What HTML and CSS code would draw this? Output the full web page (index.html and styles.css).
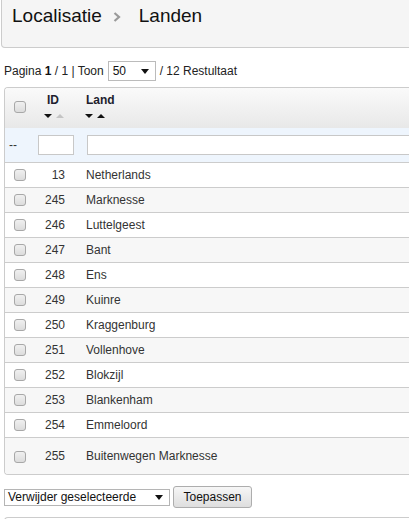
FILE: index.html
```html
<!DOCTYPE html>
<html lang="nl">
<head>
<meta charset="utf-8">
<title>Landen</title>
<link rel="stylesheet" href="styles.css">
</head>
<body>
<div class="page">
  <div class="crumbs">
    <span>Localisatie</span>
    <svg class="sep" width="8" height="10" viewBox="0 0 8 10"><polyline points="1.5,1 6,5 1.5,9" fill="none" stroke="#9a9a9a" stroke-width="2.2"/></svg>
    <span>Landen</span>
  </div>

  <div class="pager">
    <span>Pagina <b>1</b> / 1 | Toon</span>
    <span class="dd dd-small"><span>50</span><svg class="caret" width="8" height="5" viewBox="0 0 8 5"><polygon points="0,0 8,0 4,5" fill="#111"/></svg></span>
    <span>/ 12 Restultaat</span>
  </div>

  <div class="grid-box">
    <table class="grid">
      <colgroup><col class="c-chk"><col class="c-id"><col class="c-land"></colgroup>
      <thead>
        <tr class="head">
          <th class="chk"><span class="cb"></span></th>
          <th class="h-id"><span class="lbl">ID</span><span class="sort"><i class="dn"></i><i class="up off"></i></span></th>
          <th class="h-land"><span class="lbl">Land</span><span class="sort"><i class="dn"></i><i class="up"></i></span></th>
        </tr>
        <tr class="filter">
          <td class="dash">--</td>
          <td class="f-id"><span class="inp inp-id"></span></td>
          <td class="f-land"><span class="inp inp-land"></span></td>
        </tr>
      </thead>
      <tbody>
        <tr><td class="chk"><span class="cb"></span></td><td class="id">13</td><td class="land">Netherlands</td></tr>
        <tr><td class="chk"><span class="cb"></span></td><td class="id">245</td><td class="land">Marknesse</td></tr>
        <tr><td class="chk"><span class="cb"></span></td><td class="id">246</td><td class="land">Luttelgeest</td></tr>
        <tr><td class="chk"><span class="cb"></span></td><td class="id">247</td><td class="land">Bant</td></tr>
        <tr><td class="chk"><span class="cb"></span></td><td class="id">248</td><td class="land">Ens</td></tr>
        <tr><td class="chk"><span class="cb"></span></td><td class="id">249</td><td class="land">Kuinre</td></tr>
        <tr><td class="chk"><span class="cb"></span></td><td class="id">250</td><td class="land">Kraggenburg</td></tr>
        <tr><td class="chk"><span class="cb"></span></td><td class="id">251</td><td class="land">Vollenhove</td></tr>
        <tr><td class="chk"><span class="cb"></span></td><td class="id">252</td><td class="land">Blokzijl</td></tr>
        <tr><td class="chk"><span class="cb"></span></td><td class="id">253</td><td class="land">Blankenham</td></tr>
        <tr><td class="chk"><span class="cb"></span></td><td class="id">254</td><td class="land">Emmeloord</td></tr>
        <tr class="last"><td class="chk"><span class="cb"></span></td><td class="id">255</td><td class="land">Buitenwegen Marknesse</td></tr>
      </tbody>
    </table>
  </div>

  <div class="actions">
    <span class="dd dd-action"><span>Verwijder geselecteerde</span><svg class="caret" width="8" height="5" viewBox="0 0 8 5"><polygon points="0,0 8,0 4,5" fill="#111"/></svg></span>
    <span class="btn">Toepassen</span>
  </div>

  <div class="next-box"></div>
</div>
</body>
</html>
```

FILE: styles.css
```css
html, body {
  margin: 0;
  padding: 0;
  overflow: hidden;
  background: #fff;
}

body {
  font-family: "Liberation Sans", Arial, sans-serif;
  font-size: 12px;
  color: #333;
}

.page {
  width: 640px;
}

/* breadcrumb header */
.crumbs {
  box-sizing: border-box;
  height: 48px;
  margin-left: 1px;
  padding: 5px 0 0 10px;
  background: #f5f5f5;
  border: 1px solid #ccc;
  border-top: none;
  border-radius: 0 0 0 4px;
  font-size: 19px;
  line-height: 22px;
  color: #111;
  display: flex;
  align-items: flex-start;
}

.crumbs .sep {
  margin: 7px 18px 0 11px;
}

/* pager line */
.pager {
  margin-top: 13px;
  padding-left: 4px;
  height: 20px;
  display: flex;
  align-items: center;
  gap: 4px;
  color: #222;
}

.pager b {
  color: #111;
}

.dd {
  box-sizing: border-box;
  display: flex;
  align-items: center;
  justify-content: space-between;
  background: #fff;
  border: 1px solid #bbb;
  color: #111;
}

.dd-small {
  width: 48px;
  height: 20px;
  padding: 0 5px 0 4px;
  font-size: 12px;
}

.dd-small .caret {
  margin-right: 1px;
}

/* grid */
.grid-box {
  margin-top: 6px;
  margin-left: 4px;
  border: 1px solid #ccc;
  border-right: none;
  border-radius: 4px 0 0 4px;
  overflow: hidden;
}

.grid {
  width: 100%;
  border-collapse: collapse;
  table-layout: fixed;
}

.c-chk { width: 28px; }
.c-id { width: 49px; }

.grid th,
.grid td {
  padding: 0;
}

.head {
  height: 40px;
  background: linear-gradient(#fafafa, #e8e8e8);
}

.head th {
  vertical-align: top;
  text-align: left;
  font-weight: bold;
  color: #1e1e2e;
  padding-top: 5px;
  line-height: 14px;
}

.head th.chk {
  vertical-align: middle;
  padding: 0 0 3px 0;
}

.lbl {
  display: block;
}

.h-id {
  padding-left: 11px !important;
}

.h-id .lbl {
  margin-left: 3px;
}

.h-land {
  padding-left: 3px !important;
}

.h-land .lbl {
  margin-left: 1px;
}

.sort {
  display: flex;
  gap: 4px;
  margin-top: 7px;
}

.sort i {
  display: block;
  width: 0;
  height: 0;
  border-left: 4.5px solid transparent;
  border-right: 4.5px solid transparent;
}

.sort .dn {
  border-top: 4px solid #111;
}

.sort .up {
  border-bottom: 4px solid #111;
}

.sort .up.off {
  border-bottom-color: #c4c4c4;
}

.filter {
  height: 34px;
  background: #eef5fd;
  border-bottom: 1px solid #ccc;
}

.filter td {
  vertical-align: top;
  padding-top: 7px;
}

.filter td.dash {
  vertical-align: middle;
  padding: 0 0 0 4px;
  color: #333;
}

.inp {
  box-sizing: border-box;
  display: block;
  height: 20px;
  background: #fff;
  border: 1px solid #c8c8c8;
}

.inp-id {
  width: 36px;
  margin-left: 5px;
}

.inp-land {
  width: 600px;
  margin-left: 5px;
}

tbody tr {
  height: 25px;
  border-bottom: 1px solid #ccc;
}

tbody tr:nth-child(even) {
  background: #f7f7f7;
}

tbody tr.last {
  height: 37px;
  border-bottom: none;
}

tbody td {
  vertical-align: middle;
  color: #333;
}

td.chk,
th.chk {
  text-align: center;
}

.cb {
  box-sizing: border-box;
  display: inline-block;
  width: 12px;
  height: 12px;
  vertical-align: middle;
  border: 1px solid #a8a8a8;
  border-radius: 3px;
  background: linear-gradient(#f0f0f0, #dcdcdc);
  margin-left: 1px;
}

td.id {
  text-align: right;
  padding-right: 17px;
}

td.land {
  padding-left: 4px;
}

/* bulk actions */
.actions {
  margin-top: 11px;
  margin-left: 4px;
  display: flex;
  align-items: center;
  gap: 3px;
}

.dd-action {
  width: 166px;
  height: 17px;
  padding: 0 6px 0 3px;
  font-size: 12px;
  border-color: #b5b5b5;
}

.btn {
  box-sizing: border-box;
  width: 79px;
  height: 22px;
  display: flex;
  align-items: center;
  justify-content: center;
  border: 1px solid #adadad;
  border-radius: 3px;
  background: linear-gradient(#f6f6f6, #dedede);
  color: #111;
}

.next-box {
  margin-top: 9px;
  margin-left: 4px;
  height: 20px;
  border: 1px solid #ccc;
  border-right: none;
  border-radius: 4px 0 0 0;
}
```
